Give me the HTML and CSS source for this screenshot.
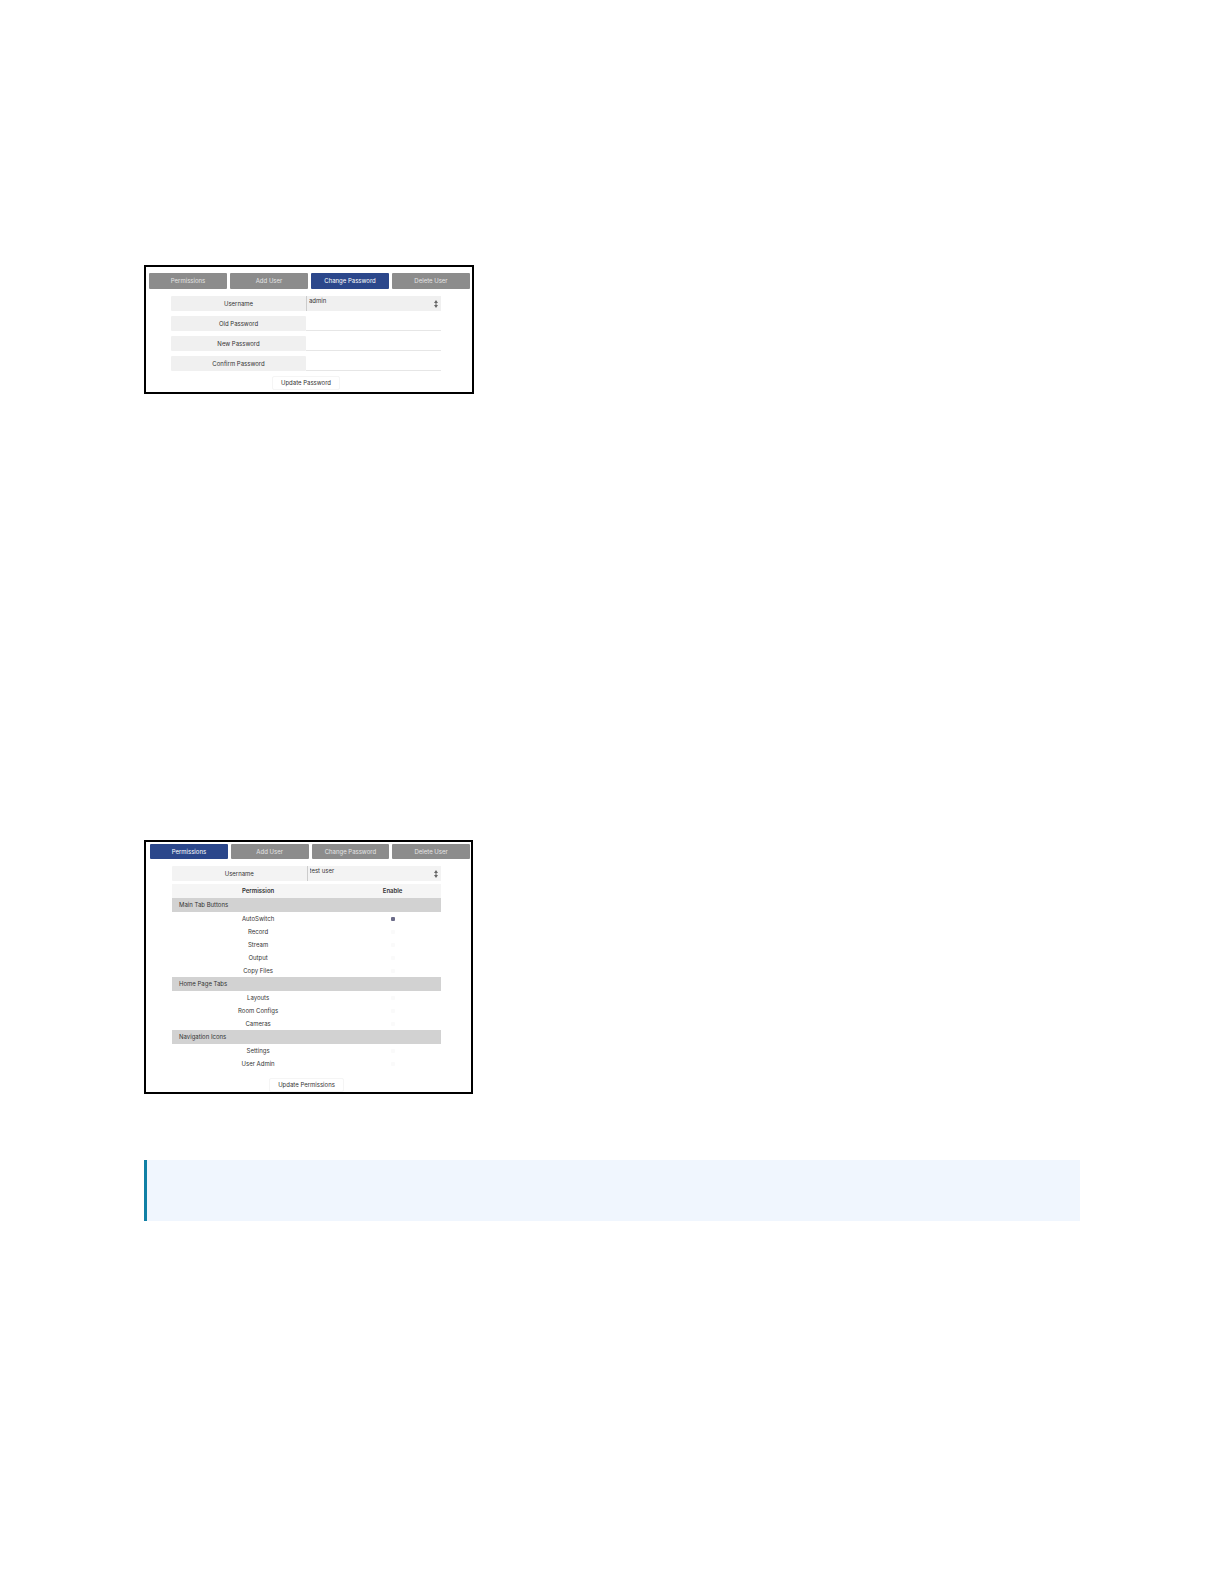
FILE: index.html
```html
<!DOCTYPE html>
<html lang="en">
<head>
  <meta charset="UTF-8">
  <meta name="viewport" content="width=device-width, initial-scale=1.0">
  <title>User Admin</title>
  <link rel="stylesheet" href="styles.css">
</head>
<body>

  <main>
    <!-- Change password -->
    <section class="panel password-panel">
      <nav class="tabs">
        <button type="button">Permissions</button>
        <button type="button">Add User</button>
        <button type="button" class="active">Change Password</button>
        <button type="button">Delete User</button>
      </nav>
      <form class="form">
        <div class="field">
          <label for="pwUser">Username</label>
          <div class="select">
            <select id="pwUser"><option>admin</option></select>
            <svg viewBox="0 0 4 8"><path d="M0 3L2 0L4 3ZM0 5L2 8L4 5Z"/><path d="M1.5 2h1v4h-1z"/></svg>
          </div>
        </div>
        <div class="field">
          <label for="oldPw">Old Password</label>
          <input type="password" id="oldPw">
        </div>
        <div class="field">
          <label for="newPw">New Password</label>
          <input type="password" id="newPw">
        </div>
        <div class="field">
          <label for="confirmPw">Confirm Password</label>
          <input type="password" id="confirmPw">
        </div>
        <button type="button" class="update">Update Password</button>
      </form>
    </section>

    <!-- Permissions -->
    <section class="panel permissions-panel">
      <nav class="tabs">
        <button type="button" class="active">Permissions</button>
        <button type="button">Add User</button>
        <button type="button">Change Password</button>
        <button type="button">Delete User</button>
      </nav>
      <form class="form">
        <div class="field">
          <label for="permUser">Username</label>
          <div class="select">
            <select id="permUser"><option>test user</option></select>
            <svg viewBox="0 0 4 8"><path d="M0 3L2 0L4 3ZM0 5L2 8L4 5Z"/><path d="M1.5 2h1v4h-1z"/></svg>
          </div>
        </div>
        <table>
          <thead>
            <tr><th class="name">Permission</th><th>Enable</th></tr>
          </thead>
          <tbody>
            <tr class="group"><th colspan="2">Main Tab Buttons</th></tr>
            <tr><td><label for="autoswitch">AutoSwitch</label></td><td><input type="checkbox" id="autoswitch" checked></td></tr>
            <tr><td><label for="record">Record</label></td><td><input type="checkbox" id="record"></td></tr>
            <tr><td><label for="stream">Stream</label></td><td><input type="checkbox" id="stream"></td></tr>
            <tr><td><label for="output">Output</label></td><td><input type="checkbox" id="output"></td></tr>
            <tr><td><label for="copy">Copy Files</label></td><td><input type="checkbox" id="copy"></td></tr>
            <tr class="group"><th colspan="2">Home Page Tabs</th></tr>
            <tr><td><label for="layouts">Layouts</label></td><td><input type="checkbox" id="layouts"></td></tr>
            <tr><td><label for="room">Room Configs</label></td><td><input type="checkbox" id="room"></td></tr>
            <tr><td><label for="cameras">Cameras</label></td><td><input type="checkbox" id="cameras"></td></tr>
            <tr class="group"><th colspan="2">Navigation Icons</th></tr>
            <tr><td><label for="settings">Settings</label></td><td><input type="checkbox" id="settings"></td></tr>
            <tr><td><label for="admin">User Admin</label></td><td><input type="checkbox" id="admin"></td></tr>
          </tbody>
        </table>
        <button type="button" class="update">Update Permissions</button>
      </form>
    </section>

    <aside class="note"></aside>
  </main>

</body>
</html>
```

FILE: styles.css
```css
* { box-sizing: border-box; }
body {
  margin: 0;
  background: #fff;
  font-family: Inter, "Liberation Sans", sans-serif;
  font-size: 6px;
  line-height: 8px;
  color: #333;
}
button, input, select {
  font: inherit;
  color: inherit;
  margin: 0;
}
main { padding: 265px 144px 80px; }
.panel {
  max-width: 330px;
  border: 2px solid #000;
}
.password-panel { padding: 6px 2px 2px 3px; }
.permissions-panel {
  max-width: 329px;
  margin-top: 446px;
  padding: 2px 1px 0 4px;
}
.tabs {
  display: grid;
  grid-template-columns: repeat(4, 1fr);
  gap: 3px;
}
.tabs button {
  height: 16px;
  padding: 0;
  border: 0;
  border-radius: 1px;
  background: #8c8c8c;
  color: #e4e4e4;
}
.permissions-panel .tabs button { height: 15px; }
.tabs .active,
.permissions-panel .tabs .active {
  background: #2b478b;
  color: #fff;
}
.form {
  display: flex;
  flex-direction: column;
  gap: 5px;
  padding: 7px 29px 0 22px;
}
.permissions-panel .form { gap: 3px; }
.field {
  display: grid;
  grid-template-columns: 1fr 1fr;
  height: 15px;
}
.field label {
  border-radius: 1px;
  background: #f0f0f0;
  line-height: 15px;
  text-align: center;
}
.field input {
  min-width: 0;
  padding: 0 3px;
  border: 0;
  border-bottom: 1px solid #e6e6e6;
  background: #fff;
}
.select {
  position: relative;
  display: grid;
}
.select select {
  appearance: none;
  padding: 0 8px 5px 2px;
  border: 0;
  border-left: 1px solid #ccc;
  border-radius: 0;
  background: #f0f0f0;
}
.permissions-panel .field label,
.permissions-panel .select select { background: #f3f3f3; }
.select svg {
  position: absolute;
  right: 3px;
  top: 4px;
  width: 4px;
  height: 8px;
  fill: #666;
}
table {
  width: 100%;
  border-collapse: collapse;
  table-layout: fixed;
}
th, td {
  height: 13px;
  padding: 0;
  text-align: center;
}
thead th {
  height: 14px;
  background: #f5f5f5;
  font-weight: 600;
}
.name { width: 64%; }
.group th {
  height: 14px;
  padding-left: 7px;
  background: #d2d2d2;
  font-weight: 400;
  text-align: left;
}
input[type="checkbox"] {
  appearance: none;
  display: block;
  width: 4px;
  height: 4px;
  margin: 0 auto;
  border-radius: 1px;
  background: #fafafa;
}
input[type="checkbox"]:checked { background: #6b6b88; }
.update {
  align-self: center;
  height: 14px;
  padding: 0 8px;
  border: 1px solid #f5f5f5;
  border-radius: 2px;
  background: #fff;
}
.permissions-panel .update { margin-top: 5px; }
.note {
  min-height: 61px;
  margin-top: 66px;
  border-left: 3px solid #0f80a5;
  background: #f0f6fe;
}
```
